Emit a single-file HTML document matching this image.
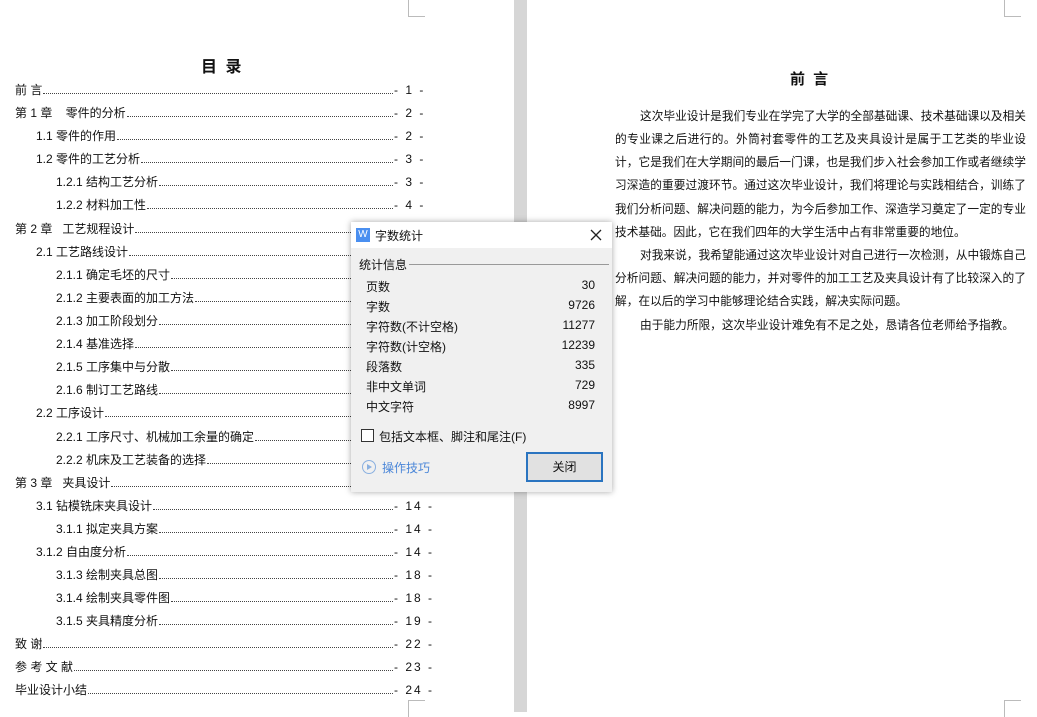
<!DOCTYPE html>
<html><head><meta charset="utf-8"><style>
*{margin:0;padding:0;box-sizing:border-box}
body{width:1037px;height:712px;overflow:hidden;background:#fff;position:relative;font-family:"Liberation Sans","Noto Sans CJK SC",sans-serif;color:#111}
.sep{position:absolute;left:514px;top:0;width:13px;height:712px;background:#d6d6d6}
.c{position:absolute;border-color:#bbb;border-style:solid;width:17px;height:17px}
.toc{position:absolute;left:0;font-size:12px;height:16px;line-height:16px;display:flex;width:426px;white-space:nowrap}
.toc .d{flex:1;border-bottom:1px dotted #444;margin:0 1px 4px 1px}
.toc .n{width:32px;text-align:left;letter-spacing:2px}
.r{position:absolute;left:615px;width:411px;font-size:11.7px;line-height:16px;text-align:justify;text-align-last:justify;white-space:nowrap}
.dlg{position:absolute;left:351px;top:222px;width:261px;height:270px;background:#f0f0f0;box-shadow:0 0 6px rgba(0,0,0,.35);font-size:12px}
.row{position:absolute;left:15px;width:229px;display:flex;justify-content:space-between}
</style></head><body>
<div class="sep"></div>
<div class="c" style="left:408px;top:0;border-width:0 0 1px 1px"></div>
<div class="c" style="left:1004px;top:0;border-width:0 0 1px 1px"></div>
<div class="c" style="left:408px;top:700px;border-width:1px 0 0 1px"></div>
<div class="c" style="left:1004px;top:700px;border-width:1px 0 0 1px"></div>
<div style="position:absolute;left:201px;top:53px;font-size:16px;font-weight:bold;letter-spacing:2px">目 录</div>

<div class="toc" style="top:82px;padding-left:15px"><span>前 言</span><span class="d"></span><span class="n">- 1 -</span></div>
<div class="toc" style="top:105px;padding-left:15px"><span>第 1 章&nbsp;&nbsp;&nbsp;&nbsp;零件的分析</span><span class="d"></span><span class="n">- 2 -</span></div>
<div class="toc" style="top:128px;padding-left:36px"><span>1.1 零件的作用</span><span class="d"></span><span class="n">- 2 -</span></div>
<div class="toc" style="top:151px;padding-left:36px"><span>1.2 零件的工艺分析</span><span class="d"></span><span class="n">- 3 -</span></div>
<div class="toc" style="top:174px;padding-left:56px"><span>1.2.1 结构工艺分析</span><span class="d"></span><span class="n">- 3 -</span></div>
<div class="toc" style="top:197px;padding-left:56px"><span>1.2.2 材料加工性</span><span class="d"></span><span class="n">- 4 -</span></div>
<div class="toc" style="top:221px;padding-left:15px"><span>第 2 章&nbsp;&nbsp;&nbsp;工艺规程设计</span><span class="d"></span><span class="n">- 5 -</span></div>
<div class="toc" style="top:244px;padding-left:36px"><span>2.1 工艺路线设计</span><span class="d"></span><span class="n">- 5 -</span></div>
<div class="toc" style="top:267px;padding-left:56px"><span>2.1.1 确定毛坯的尺寸</span><span class="d"></span><span class="n">- 5 -</span></div>
<div class="toc" style="top:290px;padding-left:56px"><span>2.1.2 主要表面的加工方法</span><span class="d"></span><span class="n">- 6 -</span></div>
<div class="toc" style="top:313px;padding-left:56px"><span>2.1.3 加工阶段划分</span><span class="d"></span><span class="n">- 7 -</span></div>
<div class="toc" style="top:336px;padding-left:56px"><span>2.1.4 基准选择</span><span class="d"></span><span class="n">- 7 -</span></div>
<div class="toc" style="top:359px;padding-left:56px"><span>2.1.5 工序集中与分散</span><span class="d"></span><span class="n">- 8 -</span></div>
<div class="toc" style="top:382px;padding-left:56px"><span>2.1.6 制订工艺路线</span><span class="d"></span><span class="n">- 8 -</span></div>
<div class="toc" style="top:405px;padding-left:36px"><span>2.2 工序设计</span><span class="d"></span><span class="n">- 9 -</span></div>
<div class="toc" style="top:429px;padding-left:56px"><span>2.2.1 工序尺寸、机械加工余量的确定</span><span class="d"></span><span class="n">- 9 -</span></div>
<div class="toc" style="top:452px;padding-left:56px"><span>2.2.2 机床及工艺装备的选择</span><span class="d"></span><span class="n">- 11 -</span></div>
<div class="toc" style="top:475px;padding-left:15px"><span>第 3 章&nbsp;&nbsp;&nbsp;夹具设计</span><span class="d"></span><span class="n">- 14 -</span></div>
<div class="toc" style="top:498px;padding-left:36px"><span>3.1 钻模铣床夹具设计</span><span class="d"></span><span class="n">- 14 -</span></div>
<div class="toc" style="top:521px;padding-left:56px"><span>3.1.1 拟定夹具方案</span><span class="d"></span><span class="n">- 14 -</span></div>
<div class="toc" style="top:544px;padding-left:36px"><span>3.1.2 自由度分析</span><span class="d"></span><span class="n">- 14 -</span></div>
<div class="toc" style="top:567px;padding-left:56px"><span>3.1.3 绘制夹具总图</span><span class="d"></span><span class="n">- 18 -</span></div>
<div class="toc" style="top:590px;padding-left:56px"><span>3.1.4 绘制夹具零件图</span><span class="d"></span><span class="n">- 18 -</span></div>
<div class="toc" style="top:613px;padding-left:56px"><span>3.1.5 夹具精度分析</span><span class="d"></span><span class="n">- 19 -</span></div>
<div class="toc" style="top:636px;padding-left:15px"><span>致 谢</span><span class="d"></span><span class="n">- 22 -</span></div>
<div class="toc" style="top:659px;padding-left:15px"><span>参 考 文 献</span><span class="d"></span><span class="n">- 23 -</span></div>
<div class="toc" style="top:682px;padding-left:15px"><span>毕业设计小结</span><span class="d"></span><span class="n">- 24 -</span></div>

<div style="position:absolute;left:790px;top:68px;font-size:15px;font-weight:bold;letter-spacing:2px">前 言</div>
<div class="r" style="top:109px;left:640px;width:386px">这次毕业设计是我们专业在学完了大学的全部基础课、技术基础课以及相关</div>
<div class="r" style="top:132px">的专业课之后进行的。外筒衬套零件的工艺及夹具设计是属于工艺类的毕业设</div>
<div class="r" style="top:155px">计，它是我们在大学期间的最后一门课，也是我们步入社会参加工作或者继续学</div>
<div class="r" style="top:178px">习深造的重要过渡环节。通过这次毕业设计，我们将理论与实践相结合，训练了</div>
<div class="r" style="top:202px">我们分析问题、解决问题的能力，为今后参加工作、深造学习奠定了一定的专业</div>
<div class="r" style="top:225px;text-align-last:auto;width:auto">技术基础。因此，它在我们四年的大学生活中占有非常重要的地位。</div>
<div class="r" style="top:248px;left:640px;width:386px">对我来说，我希望能通过这次毕业设计对自己进行一次检测，从中锻炼自己</div>
<div class="r" style="top:271px">分析问题、解决问题的能力，并对零件的加工工艺及夹具设计有了比较深入的了</div>
<div class="r" style="top:294px;text-align-last:auto;width:auto">解，在以后的学习中能够理论结合实践，解决实际问题。</div>
<div class="r" style="top:318px;left:640px;text-align-last:auto;width:auto">由于能力所限，这次毕业设计难免有不足之处，恳请各位老师给予指教。</div>

<div class="dlg">
 <div style="position:absolute;left:0;top:0;width:261px;height:26px;background:#fff"></div>
 <div style="position:absolute;left:5px;top:6px;width:14px;height:14px;background:#4a8ff0;color:#fff;font-size:10px;line-height:14px;text-align:center">W</div>
 <div style="position:absolute;left:24px;top:5px;font-size:12px">字数统计</div>
 <svg style="position:absolute;left:239px;top:7px" width="12" height="12"><path d="M1 1L11 11M11 1L1 11" stroke="#222" stroke-width="1.3"/></svg>
 <div style="position:absolute;left:8px;top:34px">统计信息</div>
 <div style="position:absolute;left:58px;top:42px;width:200px;height:1px;background:#999"></div>
 <div class="row" style="top:56px"><span>页数</span><span>30</span></div>
 <div class="row" style="top:76px"><span>字数</span><span>9726</span></div>
 <div class="row" style="top:96px"><span>字符数(不计空格)</span><span>11277</span></div>
 <div class="row" style="top:116px"><span>字符数(计空格)</span><span>12239</span></div>
 <div class="row" style="top:136px"><span>段落数</span><span>335</span></div>
 <div class="row" style="top:156px"><span>非中文单词</span><span>729</span></div>
 <div class="row" style="top:176px"><span>中文字符</span><span>8997</span></div>
 <div style="position:absolute;left:10px;top:207px;width:13px;height:13px;border:1px solid #333;background:#fff"></div>
 <div style="position:absolute;left:28px;top:206px">包括文本框、脚注和尾注(F)</div>
 <div style="position:absolute;left:11px;top:238px;width:14px;height:14px;border:1px solid #8ab0e0;border-radius:50%"></div>
 <div style="position:absolute;left:16px;top:242px;width:0;height:0;border-left:5px solid #8ab0e0;border-top:3px solid transparent;border-bottom:3px solid transparent"></div>
 <div style="position:absolute;left:31px;top:237px;color:#4a86d8">操作技巧</div>
 <div style="position:absolute;left:175px;top:230px;width:77px;height:30px;border:2px solid #2a74c0;background:#e1e1e1;text-align:center;line-height:26px">关闭</div>
</div>
</body></html>
